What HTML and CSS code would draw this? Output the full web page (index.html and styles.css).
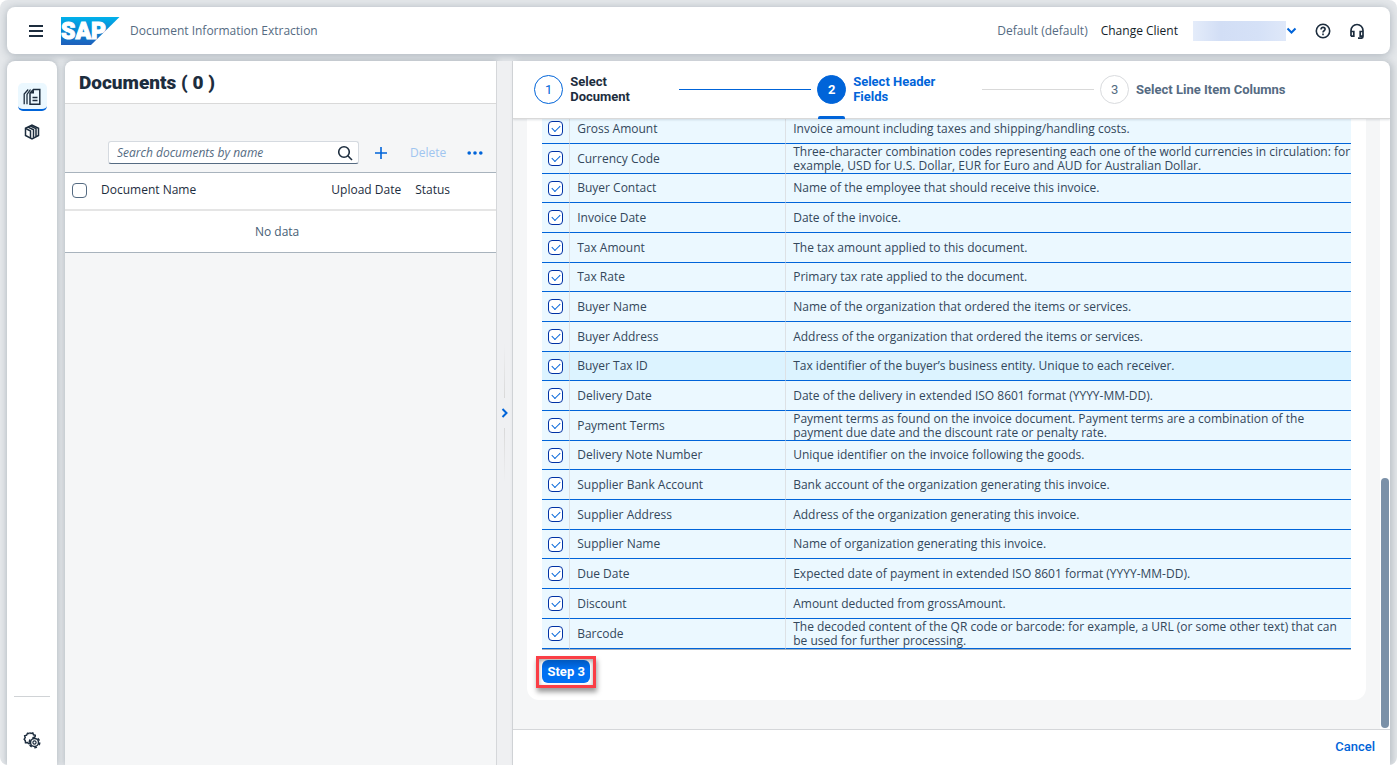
FILE: index.html
```html
<!DOCTYPE html>
<html lang="en">
<head>
<meta charset="utf-8">
<title>Document Information Extraction</title>
<link rel="stylesheet" href="styles.css">
</head>
<body>
<div class="app">
  <header class="shell">
    <button class="icon-btn menu" aria-label="Menu"><svg width="16" height="14" viewBox="0 0 16 14"><path d="M1 2h14M1 7h14M1 12h14" stroke="#1d2d3e" stroke-width="2"/></svg></button>
    <svg class="logo" width="59" height="28" viewBox="0 0 59 28" role="img" aria-label="SAP">
      <defs><linearGradient id="sap" x1="0" y1="0" x2="0" y2="1"><stop offset="0" stop-color="#00b1eb"/><stop offset=".5" stop-color="#0a86d2"/><stop offset="1" stop-color="#1e5fbb"/></linearGradient></defs>
      <path d="M0 0H58.500L30 28H0z" fill="url(#sap)"/>
      <text x="0" y="22" class="logo-text">SAP</text>
    </svg>
    <span class="product">Document Information Extraction</span>
    <span class="client">Default (default)</span>
    <button class="text-btn">Change Client</button>
    <button class="user" aria-label="Account"><span class="user-name"></span><svg width="11" height="8" viewBox="0 0 11 8"><path d="M1.500 1.500l4 4 4-4" fill="none" stroke="#0064d9" stroke-width="2"/></svg></button>
    <button class="icon-btn" aria-label="Help"><svg width="16" height="16" viewBox="0 0 16 16" fill="none" stroke="#1d2d3e" stroke-width="1.600"><circle cx="8" cy="8" r="6.700"/><path d="M6 6.400c0-2.700 4.100-2.600 4.100-.1C10.100 7.800 8 7.700 8 9.400"/><path d="M8 10.600v1.600"/></svg></button>
    <button class="icon-btn" aria-label="Support"><svg width="16" height="16" viewBox="0 0 16 16" fill="none" stroke="#1d2d3e" stroke-width="1.700"><path d="M2 13.200V7.500a6 6 0 0 1 12 0v5.700c0 1.200-.8 2-2 2H9M2 8.500h2.800v4.700H2M14 8.500h-2.800v4.700H14"/></svg></button>
  </header>

  <div class="main">
    <nav class="rail">
      <button class="rail-btn active" aria-label="Documents"><svg width="18" height="18" viewBox="0 0 18 18" fill="none" stroke="#1d2d3e" stroke-width="1.500"><path d="M7 5L10.500 1.500h6.300v14.700H7z"/><path d="M7 5.500L11 1.500v4z" fill="#1d2d3e" stroke="none"/><path d="M9.500 9.500h5M9.500 12.500h5M1.200 16.200V6l4-4.500M4 16.200V6.500l3.500-5" stroke-width="1.300"/></svg></button>
      <button class="rail-btn" aria-label="Schemas"><svg width="16" height="16" viewBox="0 0 16 16" fill="none" stroke="#1d2d3e" stroke-width="1.500"><path d="M1.500 4.300L8 1.200l6.500 3v7.300L8 14.800l-6.500-3.300z"/><path d="M1.500 4.300L6.500 7v7M4 3.100l5.500 2.700v8M6.500 2l5.500 2.700v7.800"/></svg></button>
      <button class="rail-btn settings" aria-label="Settings"><svg width="18" height="18" viewBox="0 0 18 18" fill="none" stroke="#1d2d3e"><path d="M6.500 1.500l1.500 1 1.800-.5.700 1.800 1.800.5-.3 2M7 11.500l-1 1.300-1.500-1.200-2 .2-.2-2L1.200 8.200l1-1.500-.5-2 1.900-.5.900-1.900 2 .2" stroke-width="1.500"/><circle cx="11.500" cy="11.500" r="4" stroke-width="1.500"/><circle cx="11.500" cy="11.500" r="1.600" stroke-width="1.200"/><circle cx="11.500" cy="11.500" r="5.200" stroke-width="1.600" stroke-dasharray="2.700 2.740"/></svg></button>
    </nav>

    <section class="docs">
      <h1>Documents ( 0 )</h1>
      <div class="toolbar">
        <div class="search">
          <input type="text" placeholder="Search documents by name" aria-label="Search documents by name">
          <svg width="16" height="16" viewBox="0 0 16 16" fill="none" stroke="#1d2d3e" stroke-width="1.600"><circle cx="7" cy="7" r="5.300"/><path d="M10.800 10.800L15 15"/></svg>
        </div>
        <button class="icon-btn" aria-label="Add"><svg width="14" height="14" viewBox="0 0 14 14"><path d="M7 1v12M1 7h12" stroke="#0064d9" stroke-width="1.600"/></svg></button>
        <button class="delete" disabled>Delete</button>
        <button class="icon-btn" aria-label="More"><svg width="16" height="4" viewBox="0 0 16 4" fill="#0064d9"><circle cx="2.200" cy="2" r="1.800"/><circle cx="8" cy="2" r="1.800"/><circle cx="13.800" cy="2" r="1.800"/></svg></button>
      </div>
      <table class="doc-table">
        <thead><tr><th class="pick"><input type="checkbox" class="box" aria-label="Select all"></th><th>Document Name</th><th class="date">Upload Date</th><th class="status">Status</th></tr></thead>
        <tbody><tr><td colspan="4">No data</td></tr></tbody>
      </table>
    </section>

    <div class="splitter"><span class="grip up"></span><button class="icon-btn" aria-label="Expand"><svg width="8" height="10" viewBox="0 0 8 10"><path d="M1.500 1l4 4-4 4" fill="none" stroke="#0064d9" stroke-width="2"/></svg></button><span class="grip"></span></div>

    <section class="wizard">
      <ol class="steps">
        <li class="done"><span class="num">1</span><span class="label">Select Document</span><span class="line"></span></li>
        <li class="current"><span class="num">2</span><span class="label">Select Header Fields</span><span class="line"></span></li>
        <li><span class="num">3</span><span class="label">Select Line Item Columns</span></li>
      </ol>
      <div class="body">
        <div class="scroll">
          <div class="card">
            <table class="fields"><tbody>
              <tr><td><input type="checkbox" checked class="box" aria-label="Gross Amount"></td><td>Gross Amount</td><td>Invoice amount including taxes and shipping/handling costs.</td></tr>
              <tr><td><input type="checkbox" checked class="box" aria-label="Currency Code"></td><td>Currency Code</td><td>Three-character combination codes representing each one of the world currencies in circulation: for example, USD for U.S. Dollar, EUR for Euro and AUD for Australian Dollar.</td></tr>
              <tr><td><input type="checkbox" checked class="box" aria-label="Buyer Contact"></td><td>Buyer Contact</td><td>Name of the employee that should receive this invoice.</td></tr>
              <tr><td><input type="checkbox" checked class="box" aria-label="Invoice Date"></td><td>Invoice Date</td><td>Date of the invoice.</td></tr>
              <tr><td><input type="checkbox" checked class="box" aria-label="Tax Amount"></td><td>Tax Amount</td><td>The tax amount applied to this document.</td></tr>
              <tr><td><input type="checkbox" checked class="box" aria-label="Tax Rate"></td><td>Tax Rate</td><td>Primary tax rate applied to the document.</td></tr>
              <tr><td><input type="checkbox" checked class="box" aria-label="Buyer Name"></td><td>Buyer Name</td><td>Name of the organization that ordered the items or services.</td></tr>
              <tr><td><input type="checkbox" checked class="box" aria-label="Buyer Address"></td><td>Buyer Address</td><td>Address of the organization that ordered the items or services.</td></tr>
              <tr class="hovered"><td><input type="checkbox" checked class="box" aria-label="Buyer Tax ID"></td><td>Buyer Tax ID</td><td>Tax identifier of the buyer’s business entity. Unique to each receiver.</td></tr>
              <tr><td><input type="checkbox" checked class="box" aria-label="Delivery Date"></td><td>Delivery Date</td><td>Date of the delivery in extended ISO 8601 format (YYYY-MM-DD).</td></tr>
              <tr><td><input type="checkbox" checked class="box" aria-label="Payment Terms"></td><td>Payment Terms</td><td>Payment terms as found on the invoice document. Payment terms are a combination of the payment due date and the discount rate or penalty rate.</td></tr>
              <tr><td><input type="checkbox" checked class="box" aria-label="Delivery Note Number"></td><td>Delivery Note Number</td><td>Unique identifier on the invoice following the goods.</td></tr>
              <tr><td><input type="checkbox" checked class="box" aria-label="Supplier Bank Account"></td><td>Supplier Bank Account</td><td>Bank account of the organization generating this invoice.</td></tr>
              <tr><td><input type="checkbox" checked class="box" aria-label="Supplier Address"></td><td>Supplier Address</td><td>Address of the organization generating this invoice.</td></tr>
              <tr><td><input type="checkbox" checked class="box" aria-label="Supplier Name"></td><td>Supplier Name</td><td>Name of organization generating this invoice.</td></tr>
              <tr><td><input type="checkbox" checked class="box" aria-label="Due Date"></td><td>Due Date</td><td>Expected date of payment in extended ISO 8601 format (YYYY-MM-DD).</td></tr>
              <tr><td><input type="checkbox" checked class="box" aria-label="Discount"></td><td>Discount</td><td>Amount deducted from grossAmount.</td></tr>
              <tr><td><input type="checkbox" checked class="box" aria-label="Barcode"></td><td>Barcode</td><td>The decoded content of the QR code or barcode: for example, a URL (or some other text) that can be used for further processing.</td></tr>
            </tbody></table>
            <div class="highlight"><button class="primary">Step 3</button></div>
          </div>
        </div>
        <div class="track"><div class="thumb"></div></div>
      </div>
      <footer class="foot"><button class="cancel">Cancel</button></footer>
    </section>
  </div>
</div>
</body>
</html>
```

FILE: styles.css
```css
* { box-sizing: border-box; }
html { background: #fff; }
body { margin: 0; font: 12px/15px "Open Sans", "Liberation Sans", sans-serif; color: #1d2d3e; }
button { font: inherit; color: inherit; background: none; border: 0; padding: 0; }
svg { display: block; }

.app {
  height: 100vh; display: flex; flex-direction: column; gap: 7px; padding: 7px 7px 0;
  background: #e4e7ea; border-radius: 8px; overflow: hidden;
}
.shell {
  flex: none; height: 47px; display: flex; align-items: center; padding: 0 25px 0 21px;
  background: #fff; border-radius: 8px; box-shadow: 0 1px 8px rgba(34, 53, 72, .3);
}
.icon-btn { display: flex; align-items: center; justify-content: center; }
.logo { margin: 0 10px 0 17px; }
.logo-text { font: 900 23px Roboto, sans-serif; fill: #fff; stroke: #fff; stroke-width: 1px; }
.product { color: #556b82; }
.client { margin-left: auto; color: #556b82; }
.text-btn { margin: 0 15px 0 13px; color: #131e29; }
.user { display: flex; align-items: center; }
.user-name { width: 93px; height: 20px; background: linear-gradient(90deg, #e4ecfa, #d2def5 30%, #d5e1f7 70%, #dfe8f9); }
.user + .icon-btn { margin: 0 18px; }

.main { flex: 1; min-height: 0; display: flex; }
.rail {
  flex: none; width: 50px; margin-right: 8px; display: flex; flex-direction: column; align-items: center;
  padding-top: 22px; background: #fff; border-radius: 8px 8px 0 0; box-shadow: 0 0 6px rgba(34, 53, 72, .3);
}
.rail-btn { width: 29px; height: 28px; display: flex; align-items: center; justify-content: center; border-radius: 5px; }
.rail-btn.active { margin-bottom: 7px; padding-top: 2px; background: #ebf8ff; border-bottom: 2px solid #0064d9; }
.settings { position: relative; margin-top: auto; margin-bottom: 11px; }
.settings::before { content: ""; position: absolute; top: -30px; left: -4px; width: 36px; height: 1px; background: #d0d3d6; }

.docs {
  flex: 1; min-width: 0; background: #f5f6f7; border-right: 1px solid #d5d7da;
  border-radius: 8px 0 0 0; box-shadow: 0 0 6px rgba(34, 53, 72, .3); overflow: hidden;
}
h1 { margin: 0; height: 43px; padding: 0 14px; background: #fff; border-bottom: 1px solid #d9d9d9; font: 900 19px/43px Roboto, sans-serif; }
.toolbar { display: flex; align-items: center; justify-content: flex-end; padding: 37px 13px 8px; }
.search { width: 251px; height: 23px; display: flex; align-items: center; padding: 0 5px 0 8px; background: #fff; border: 1px solid #d5dae0; border-bottom-color: #556b82; border-radius: 3px; }
.search input { flex: 1; min-width: 0; border: 0; padding: 0; background: none; font: inherit; font-style: italic; }
.search input::placeholder { color: #556b82; opacity: 1; }
.toolbar > .icon-btn { margin-left: 15px; }
.delete { margin: 0 6px 0 22px; color: #a0c5f0; }

table { width: 100%; border-collapse: separate; border-spacing: 0; table-layout: fixed; }
th, td { padding: 0; text-align: left; font-weight: 400; }
.doc-table { background: #fff; border-top: 1px solid #a8b3bd; border-bottom: 1px solid #a8b3bd; }
.doc-table th { height: 38px; padding-bottom: 3px; border-bottom: 2px solid #e5e5e5; }
.doc-table td { height: 41px; text-align: center; color: #475e75; padding-right: 7px; }
.doc-table .pick { width: 36px; padding: 0 0 1px 7px; }
.doc-table .date { width: 114px; text-align: right; padding-right: 14px; }
.doc-table .status { width: 81px; }

.box { appearance: none; display: block; width: 15px; height: 15px; margin: 0; border: 1px solid #556b82; border-radius: 4px; background: #fff; }
.box:checked { border-color: #0032a5; display: flex; align-items: center; justify-content: center; }
.box:checked::before { content: ""; width: 7px; height: 4px; margin-bottom: 2px; border: solid #0064d9; border-width: 0 0 1px 1px; transform: rotate(-45deg); }

.splitter { flex: none; width: 16px; display: flex; flex-direction: column; align-items: center; justify-content: center; gap: 10px; background: #eff0f2; border-right: 1px solid #d5d7da; }
.grip { width: 1px; height: 54px; background: linear-gradient(#d9d9d9, transparent); }
.grip.up { background: linear-gradient(transparent, #d9d9d9); }

.wizard { flex: none; width: 63.4%; display: flex; flex-direction: column; background: #f5f6f7; border-radius: 0 8px 0 0; box-shadow: 3px 0 6px rgba(34, 53, 72, .2); overflow: hidden; }
.steps { position: relative; flex: none; height: 58px; margin: 0; padding: 0 7px 0 21px; list-style: none; display: grid; grid-template-columns: repeat(3, 1fr); background: #fff; border-bottom: 1px solid #d9d9d9; box-shadow: 0 1px 2px rgba(34, 53, 72, .15); }
.steps li { position: relative; display: flex; align-items: center; color: #556b82; font: 700 13px/15px Roboto, sans-serif; }
.num { flex: none; width: 29px; height: 29px; margin-right: 7px; border: 1px solid #d9dbde; border-radius: 50%; font-weight: 400; line-height: 27px; text-align: center; }
.label { flex: none; padding-bottom: 1px; }
.line { flex: 1; height: 1px; margin-right: 6px; background: #d9d9d9; }
.steps .done { color: #1d2d3e; }
.done .label { width: 109px; padding-right: 40px; }
.done .num { color: #0064d9; border-color: #0064d9; }
.steps .done .line { background: #0064d9; }
.current .label { width: 129px; padding-right: 40px; color: #0064d9; }
.current .num { background: #0064d9; border-color: #0064d9; color: #fff; font-weight: 700; }
.current::after { content: ""; position: absolute; left: 1px; bottom: -1px; width: 27px; height: 3px; border-radius: 2px 2px 0 0; background: #0064d9; }

.body { flex: 1; min-height: 0; display: flex; }
.scroll { flex: 1; min-width: 0; display: flex; flex-direction: column; justify-content: flex-end; padding: 0 14px 29px; overflow: hidden; }
.card { padding: 0 15px 12px; background: #fff; border-radius: 0 0 12px 12px; }
.fields { border-bottom: 1px solid #a8b3bd; }
.fields td { height: 30px; line-height: 14px; padding: 0 0 0 7px; background: #ebf8ff; border-bottom: 1px solid #0064d9; border-left: 1px solid #dde1e5; color: #33475b; }
.fields tr:nth-child(3n):not(:last-child) td { height: 29px; }
.fields td:first-child { width: 27px; padding: 0 6px; border-left: 0; }
.fields td:nth-child(2) { width: 216px; }
.fields .hovered td { background: #dcf3ff; }
.highlight { width: 60px; height: 32px; margin: 6px 0 0 -6px; padding: 1px 3px; border: 3px solid #fa3e46; box-shadow: 1px 4px 5px rgba(0, 0, 0, .4), inset 0 2px 4px rgba(0, 0, 0, .35); }
.primary { width: 100%; height: 23px; border-radius: 6px; background: linear-gradient(#0058bf, #0070f2 40%); color: #fff; font: 700 13px/15px Roboto, sans-serif; }
.track { flex: none; width: 10px; padding: 0 1px 1px; display: flex; flex-direction: column; justify-content: flex-end; background: #fff; }
.thumb { height: 41%; border-radius: 4px; background: #7b91a8; }
.foot { flex: none; height: 36px; display: flex; align-items: center; justify-content: flex-end; padding: 0 15px 2px 0; background: #fff; border-top: 1px solid #d5d7da; }
.cancel { color: #0064d9; font: 500 13px/15px Roboto, sans-serif; }
```
